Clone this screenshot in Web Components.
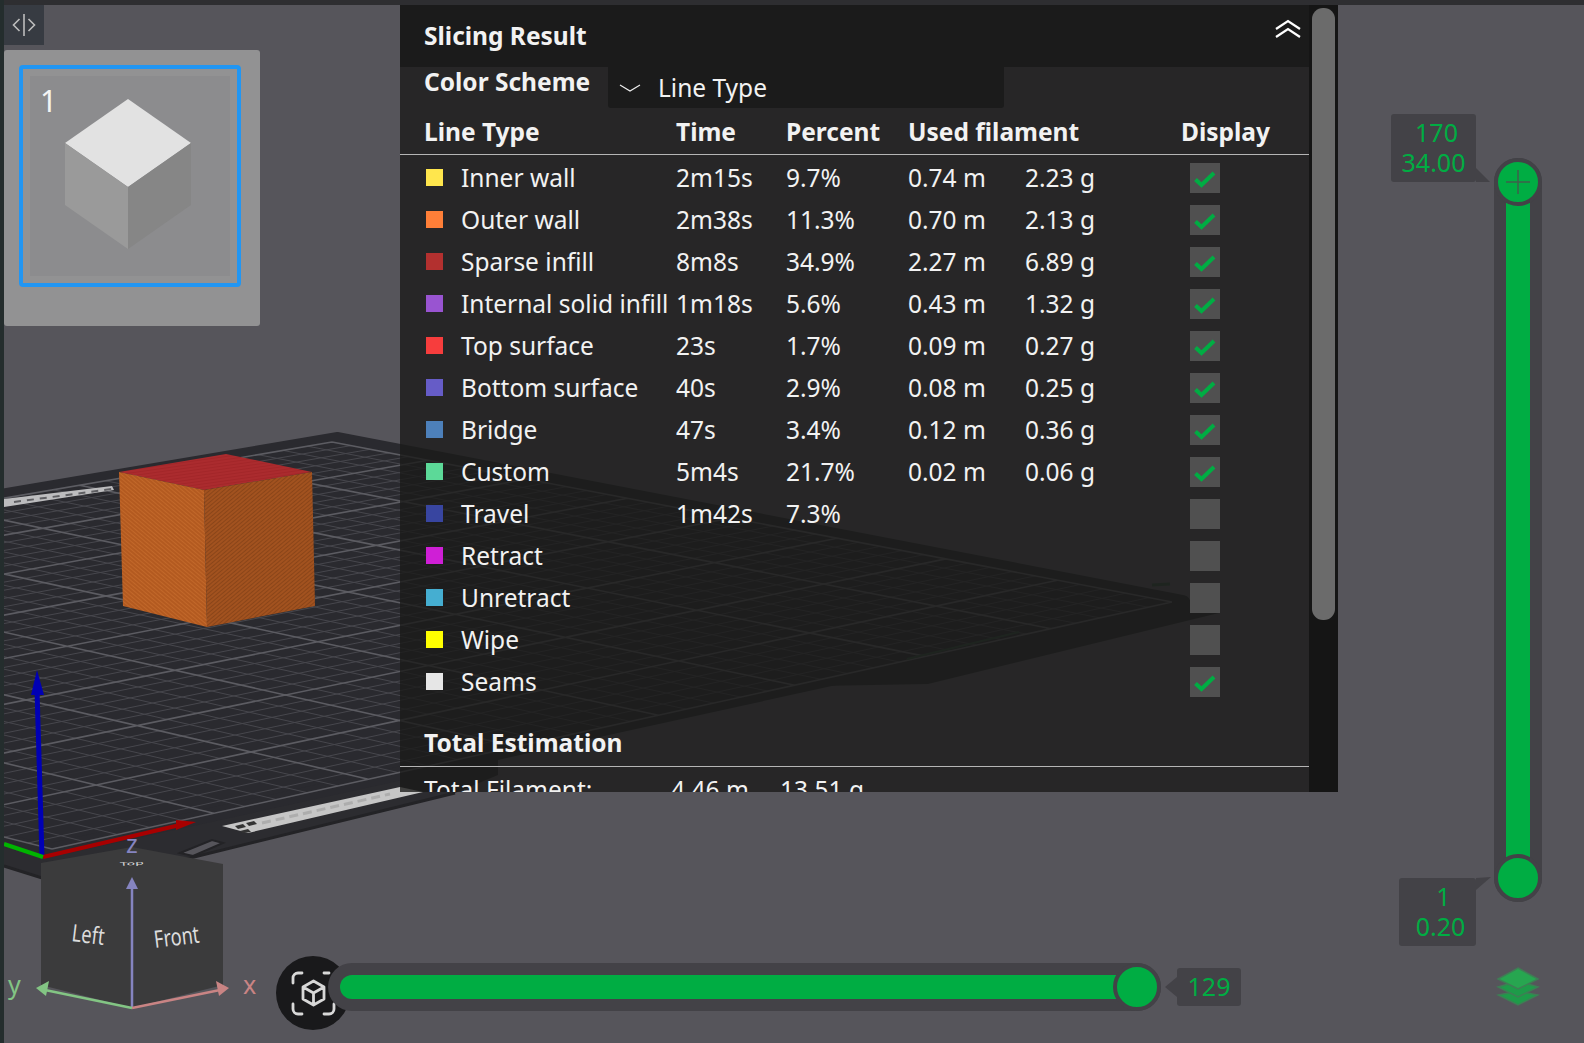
<!DOCTYPE html>
<html>
<head>
<meta charset="utf-8">
<title>Slicing Result</title>
<style>
    html, body { margin: 0; padding: 0; background: #56555b; }
    body { width: 1584px; height: 1043px; overflow: hidden; font-family: "Noto Sans", "Liberation Sans", sans-serif; }
</style>
</head>
<body>
<slicer-view>
    <plate-list></plate-list>
    <slice-panel></slice-panel>
    <layer-slider></layer-slider>
    <move-slider></move-slider>
</slicer-view>

<script>
const GREEN = '#00ad43';
const TRACK = '#434247';

// maps (u,v) of the unit square onto the plate quad, with perspective
function plateMapper(p0, p1, p2, p3) {
    const dx1 = p1[0] - p2[0], dx2 = p3[0] - p2[0], sx = p0[0] - p1[0] + p2[0] - p3[0];
    const dy1 = p1[1] - p2[1], dy2 = p3[1] - p2[1], sy = p0[1] - p1[1] + p2[1] - p3[1];
    const det = dx1 * dy2 - dx2 * dy1;
    const g = (sx * dy2 - dx2 * sy) / det;
    const h = (dx1 * sy - sx * dy1) / det;
    const a = p1[0] - p0[0] + g * p1[0], b = p3[0] - p0[0] + h * p3[0], c = p0[0];
    const d = p1[1] - p0[1] + g * p1[1], e = p3[1] - p0[1] + h * p3[1], f = p0[1];
    return (u, v) => {
        const w = g * u + h * v + 1;
        return [((a * u + b * v + c) / w).toFixed(1), ((d * u + e * v + f) / w).toFixed(1)];
    };
}

function plateGrid() {
    const map = plateMapper([-800, 636], [332, 442], [1172, 602], [52, 849]);
    const count = 40;
    let minor = '', major = '';
    for (let i = 0; i <= count; i++) {
        const t = i / count;
        const a1 = map(t, 0), a2 = map(t, 1), b1 = map(0, t), b2 = map(1, t);
        const line = `M${a1[0]} ${a1[1]}L${a2[0]} ${a2[1]}M${b1[0]} ${b1[1]}L${b2[0]} ${b2[1]}`;
        if (i % 5 === 0) major += line; else minor += line;
    }
    return `<path d="${minor}" stroke="#47474d" stroke-width="1" fill="none"/>
            <path d="${major}" stroke="#5c5c62" stroke-width="1.6" fill="none"/>`;
}

class SlicerView extends HTMLElement {
    constructor() {
        super();
        this.attachShadow({ mode: 'open' }).innerHTML = `
            <style>
                :host { display: block; position: relative; width: 1584px; height: 1043px; overflow: hidden; background: #56555b; }
                svg { position: absolute; left: 0; top: 0; }
                .cube-label { font-family: "Noto Sans", sans-serif; fill: #dcdcdc; font-size: 24px; }
                .axis-label { font-family: "Noto Sans", sans-serif; font-size: 25px; }
                .top-strip { position: absolute; left: 0; top: 0; width: 100%; height: 5px; background: #2e2e31; }
                .left-strip { position: absolute; left: 0; top: 0; width: 4px; height: 100%; background: #242d2d; }
            </style>
            <svg width="1584" height="1043" viewBox="0 0 1584 1043">
                <defs>
                    <pattern id="wall-left" width="3" height="3" patternUnits="userSpaceOnUse" patternTransform="rotate(40)">
                        <rect width="3" height="3" fill="#b35a20"/><rect width="3" height="1" fill="#c2682a"/>
                    </pattern>
                    <pattern id="wall-right" width="3" height="3" patternUnits="userSpaceOnUse" patternTransform="rotate(-40)">
                        <rect width="3" height="3" fill="#a2521f"/><rect width="3" height="1" fill="#8a4519"/>
                    </pattern>
                    <pattern id="wall-top" width="3" height="3" patternUnits="userSpaceOnUse" patternTransform="rotate(-8)">
                        <rect width="3" height="3" fill="#ab2b2e"/><rect width="3" height="1" fill="#a32629"/>
                    </pattern>
                </defs>

                <polygon points="4,866 42,878 190,858 455,793 498,775 498,760 819,686 928,684 1219,613 1189,600 42,857 4,847" fill="#2c2c30"/>
                <polygon points="-814,634 338,439 1183,602 46,851" fill="#2a2a2f" stroke="#2a2a2f" stroke-width="14" stroke-linejoin="round"/>
                ${plateGrid()}
                <path d="M4 866L42 878L190 858L455 793" stroke="#232326" stroke-width="3" fill="none"/>
                <path d="M180 853L212 840L223 843L193 856Z" fill="#56555b" stroke="#232326" stroke-width="2"/>
                <path d="M1086 635L1130 620L1135 624L1095 638Z" fill="#2a2a2e"/>
                <path d="M907 659L1019 632" stroke="#2f4a3a" stroke-width="2"/>
                <path d="M1152 585L1170 584" stroke="#2f4a3a" stroke-width="3"/>

                <polygon points="222,826 248,833 423,792 400,787" fill="#c6c6c6"/>
                <path d="M262 823L390 794" stroke="#adadad" stroke-width="3" stroke-dasharray="9 5"/>
                <polygon points="235,826 243,824 246,827 238,829" fill="#333"/>
                <polygon points="246,823 254,821 257,824 249,826" fill="#333"/>
                <polygon points="240,831 248,829 251,832 243,833" fill="#333"/>
                <polygon points="4,499 112,486 114,490 4,507" fill="#bcbcbe"/>
                <path d="M14 502L112 489" stroke="#5e5e62" stroke-width="2" stroke-dasharray="7 6"/>

                <polygon points="119,472 226,454 312,472 204,490" fill="url(#wall-top)"/>
                <polygon points="119,472 204,490 207,627 123,606" fill="url(#wall-left)"/>
                <polygon points="204,490 312,472 315,606 207,627" fill="url(#wall-right)"/>

                <path d="M42 857L37 690" stroke="#0000b4" stroke-width="5"/>
                <polygon points="37,670 44,695 31,695" fill="#0000b4"/>
                <path d="M43 857L180 825" stroke="#a80000" stroke-width="4"/>
                <polygon points="196,822 176,830 176,820" fill="#a80000"/>
                <path d="M43 857L4 844" stroke="#00b400" stroke-width="4"/>

                <polygon points="41,863 132,847 223,864 223,985 132,1008 41,985" fill="#3b3b3c"/>
                <text class="cube-label" transform="translate(71 941) rotate(7) scale(.76 1)">Left</text>
                <text class="cube-label" transform="translate(155 948) rotate(-7) scale(.76 1)">Front</text>
                <text class="cube-label" style="font-size:7px" transform="translate(120 866) rotate(-4) scale(2 .7)">Top</text>

                <path d="M132 1008V886" stroke="#8584c0" stroke-width="2.5"/>
                <polygon points="132,877 138,889 126,889" fill="#8584c0"/>
                <path d="M132 1008L220 990" stroke="#c98484" stroke-width="2.5"/>
                <polygon points="229,988 216,981 219,996" fill="#c98484"/>
                <path d="M132 1008L45 990" stroke="#83c584" stroke-width="2.5"/>
                <polygon points="36,988 49,981 46,996" fill="#83c584"/>
                <text class="axis-label" x="126" y="853" fill="#8584c0">z</text>
                <text class="axis-label" x="243" y="994" fill="#c98484">x</text>
                <text class="axis-label" x="8" y="994" fill="#83c584">y</text>

                <circle cx="313" cy="993" r="37" fill="#19191b"/>
                <g fill="none" stroke="#d8d8d8" stroke-width="2.8" stroke-linecap="round" stroke-linejoin="round">
                    <path d="M302 973H298a5 5 0 0 0 -5 5V983M293 1004V1009a5 5 0 0 0 5 5H302M324 1014H329a5 5 0 0 0 5 -5V1004M324 973H329"/>
                    <path d="M313.500 981L324 987V999L313.500 1005L303 999V987ZM303 987L313.500 993L324 987M313.500 993V1005"/>
                </g>
            </svg>
            <div class="top-strip"></div>
            <div class="left-strip"></div>
            <slot></slot>
        `;
    }
}

class PlateList extends HTMLElement {
    constructor() {
        super();
        this.attachShadow({ mode: 'open' }).innerHTML = `
            <style>
                :host { position: absolute; left: 4px; top: 5px; display: flex; flex-direction: column; gap: 5px; width: 256px; }
                .toggle { width: 40px; height: 40px; background: #373b42; display: flex; align-items: center; justify-content: center; }
                .card { box-sizing: border-box; height: 276px; padding: 15px 19px 39px 15px; background: #929293; border-radius: 3px; }
                .frame { box-sizing: border-box; height: 222px; border: 4px solid #2196f3; border-radius: 4px; padding: 7px; }
                .thumb { position: relative; width: 200px; height: 200px; background: #8c8c8e; }
                .thumb svg { display: block; }
                .index { position: absolute; left: 10px; top: 6px; font-size: 30px; line-height: 38px; color: #f4f4f4; }
            </style>
            <div class="toggle">
                <svg width="26" height="26" viewBox="0 0 26 26" fill="none" stroke="#bdbdbd" stroke-width="1.6">
                    <path d="M8.500 7L2.500 13L8.500 19M17.500 7L23.500 13L17.500 19"/><path d="M13 2V24"/>
                </svg>
            </div>
            <div class="card">
                <div class="frame">
                    <div class="thumb">
                        <svg width="200" height="200" viewBox="0 0 200 200">
                            <polygon points="98,23 161,67 98,111 35,67" fill="#e2e2e2"/>
                            <polygon points="35,67 98,111 98,173 35,129" fill="#9a9a9a"/>
                            <polygon points="98,111 161,67 161,129 98,173" fill="#868686"/>
                        </svg>
                        <span class="index">1</span>
                    </div>
                </div>
            </div>
        `;
    }
}

const LINE_TYPES = [
    ['#ffe64d', 'Inner wall', '2m15s', '9.7%', '0.74 m', '2.23 g', true],
    ['#ff7f38', 'Outer wall', '2m38s', '11.3%', '0.70 m', '2.13 g', true],
    ['#b3302f', 'Sparse infill', '8m8s', '34.9%', '2.27 m', '6.89 g', true],
    ['#9954d1', 'Internal solid infill', '1m18s', '5.6%', '0.43 m', '1.32 g', true],
    ['#f73d3d', 'Top surface', '23s', '1.7%', '0.09 m', '0.27 g', true],
    ['#665cc7', 'Bottom surface', '40s', '2.9%', '0.08 m', '0.25 g', true],
    ['#4d80ba', 'Bridge', '47s', '3.4%', '0.12 m', '0.36 g', true],
    ['#5cd998', 'Custom', '5m4s', '21.7%', '0.02 m', '0.06 g', true],
    ['#3845a0', 'Travel', '1m42s', '7.3%', '', '', false],
    ['#cf1fd6', 'Retract', '', '', '', '', false],
    ['#45aed1', 'Unretract', '', '', '', '', false],
    ['#ffff00', 'Wipe', '', '', '', '', false],
    ['#e6e6e6', 'Seams', '', '', '', '', true],
];

class SlicePanel extends HTMLElement {
    constructor() {
        super();
        const rows = LINE_TYPES.map(([color, name, time, percent, length, weight, shown]) => `
            <div class="row">
                <span class="name"><i style="background:${color}"></i>${name}</span>
                <span>${time}</span><span>${percent}</span><span>${length}</span><span>${weight}</span>
                <span class="box">${shown ? `<svg width="30" height="30" viewBox="0 0 30 30"><path d="M5.500 16.500L11.500 22L24 10" fill="none" stroke="${GREEN}" stroke-width="4"/></svg>` : ''}</span>
            </div>`).join('');
        this.attachShadow({ mode: 'open' }).innerHTML = `
            <style>
                :host { position: absolute; left: 400px; top: 5px; width: 938px; height: 787px; display: flex; overflow: hidden; color: #f2f2f2; font-size: 24.500px; }
                .content { width: 909px; display: flex; flex-direction: column; background: rgba(26, 26, 24, .78); overflow: hidden; }
                .title { flex: none; height: 62px; box-sizing: border-box; padding: 14px 8px 0 24px; background: #1b1b1b; display: flex; justify-content: space-between; }
                b { font-weight: 700; line-height: 34px; }
                .title svg { margin: 0; }
                .scheme { flex: none; height: 41px; display: flex; }
                .scheme b { width: 184px; padding-left: 24px; line-height: 29px; }
                .combo { width: 396px; height: 41px; background: #1b1b1b; border-radius: 0 0 3px 3px; display: flex; align-items: center; box-sizing: border-box; padding: 0 0 0 11px; gap: 17px; }
                .row, .head { display: grid; grid-template-columns: 276px 110px 122px 117px 156px 128px; align-items: center; white-space: nowrap; }
                .head { flex: none; height: 47px; border-bottom: 1px solid #b5b5b5; box-sizing: border-box; font-weight: 700; }
                .head span:first-child { padding-left: 24px; }
                .rows { flex: none; padding-top: 2px; }
                .row { height: 42px; }
                .row > span { padding-bottom: 1px; }
                .name { display: flex; align-items: center; gap: 18px; padding-left: 26px; }
                .name i { flex: none; width: 17px; height: 17px; }
                .row > .box { width: 30px; height: 30px; background: #505050; margin-left: 9px; padding: 0; }
                .box svg { display: block; }
                .total-title { flex: none; margin-top: 17px; height: 47px; box-sizing: border-box; padding: 0 0 0 24px; border-bottom: 1px solid #b5b5b5; font-weight: 700; line-height: 45px; }
                .total-row { flex: none; display: grid; grid-template-columns: 271px 109px 120px; padding-top: 6px; }
                .total-row span:first-child { padding-left: 24px; }
                .scroll { width: 29px; background: #151515; box-sizing: border-box; padding: 3px 3px 0 3px; }
                .thumb { height: 612px; background: #6b6b6b; border-radius: 11px; }
            </style>
            <div class="content">
                <div class="title">
                    <b>Slicing Result</b>
                    <svg width="26" height="20" viewBox="0 0 26 20" fill="none" stroke="#fff" stroke-width="2.200"><path d="M1 10L13 2L25 10M1 18L13 10L25 18"/></svg>
                </div>
                <div class="scheme">
                    <b>Color Scheme</b>
                    <div class="combo">
                        <svg width="22" height="10" viewBox="0 0 22 10" fill="none" stroke="#eee" stroke-width="1.200"><path d="M1 2L11 8L21 2"/></svg>
                        <span>Line Type</span>
                    </div>
                </div>
                <div class="head"><span>Line Type</span><span>Time</span><span>Percent</span><span>Used filament</span><span></span><span>Display</span></div>
                <div class="rows">${rows}</div>
                <div class="total-title">Total Estimation</div>
                <div class="total-row"><span>Total Filament:</span><span>4.46 m</span><span>13.51 g</span></div>
            </div>
            <div class="scroll"><div class="thumb"></div></div>
        `;
    }
}

const TOOLTIP_STYLE = `
    .tip { position: absolute; box-sizing: border-box; background: ${TRACK}; border-radius: 3px; color: ${GREEN}; font-size: 25px; line-height: 30px; text-align: center; }
    .tail { position: absolute; fill: ${TRACK}; }
    .knob { position: absolute; box-sizing: border-box; width: 48px; height: 48px; border-radius: 50%; background: ${GREEN}; border: 4px solid ${TRACK}; }
`;

class LayerSlider extends HTMLElement {
    constructor() {
        super();
        this.attachShadow({ mode: 'open' }).innerHTML = `
            <style>
                ${TOOLTIP_STYLE}
                :host { position: absolute; left: 1391px; top: 114px; width: 160px; height: 920px; display: block; }
                .track { position: absolute; left: 103px; top: 44px; width: 48px; height: 744px; background: ${TRACK}; border-radius: 24px; }
                .fill { position: absolute; left: 12px; top: 45px; width: 24px; height: 654px; background: ${GREEN}; }
                .top { left: 0; top: 0; }
                .bottom { left: 0; top: 696px; }
                .knob svg { display: block; }
                .layers { position: absolute; left: 105px; top: 852px; }
                .nudge { padding-left: 6px; }
            </style>
            <div class="tip" style="left:0;top:0;width:85px;height:68px;padding-top:3px"><span class="nudge">170</span><br>34.00</div>
            <svg class="tail" style="left:85px;top:54px" width="15" height="14"><polygon points="0,0 14,14 0,14"/></svg>
            <div class="track">
                <div class="fill"></div>
                <div class="knob top">
                    <svg width="40" height="40" viewBox="0 0 40 40" fill="none" stroke="#3f5f4c" stroke-width="1.500"><path d="M20 8V32M8 20H32"/></svg>
                </div>
                <div class="knob bottom"></div>
            </div>
            <div class="tip" style="left:8px;top:764px;width:77px;height:68px;padding:3px 0 0 6px"><span class="nudge">1</span><br>0.20</div>
            <svg class="tail" style="left:85px;top:763px" width="16" height="14"><polygon points="0,1 15,0 0,13"/></svg>
            <svg class="layers" width="44" height="40" viewBox="0 0 44 40">
                <g stroke="#3f7d55" stroke-width="1.500">
                    <polygon points="22,25 42,29 22,39 2,29" fill="#1e9b49"/>
                    <polygon points="22,15 42,21 22,31 2,21" fill="#1e9b49"/>
                    <polygon points="22,2 42,13 22,23 2,13" fill="#27a650"/>
                </g>
            </svg>
        `;
    }
}

class MoveSlider extends HTMLElement {
    constructor() {
        super();
        this.attachShadow({ mode: 'open' }).innerHTML = `
            <style>
                ${TOOLTIP_STYLE}
                :host { position: absolute; left: 328px; top: 963px; width: 920px; height: 48px; display: block; }
                .track { position: absolute; left: 0; top: 0; width: 833px; height: 48px; background: ${TRACK}; border-radius: 24px; }
                .fill { position: absolute; left: 12px; top: 12px; width: 780px; height: 24px; background: ${GREEN}; border-radius: 12px 0 0 12px; }
                .knob { left: 785px; top: 0; }
            </style>
            <div class="track"><div class="fill"></div><div class="knob"></div></div>
            <svg class="tail" style="left:837px;top:12px" width="13" height="24"><polygon points="0,12 12,2 12,22"/></svg>
            <div class="tip" style="left:849px;top:5px;width:64px;height:38px;padding-top:3px">129</div>
        `;
    }
}

customElements.define('slicer-view', SlicerView);
customElements.define('plate-list', PlateList);
customElements.define('slice-panel', SlicePanel);
customElements.define('layer-slider', LayerSlider);
customElements.define('move-slider', MoveSlider);
</script>
</body>
</html>
